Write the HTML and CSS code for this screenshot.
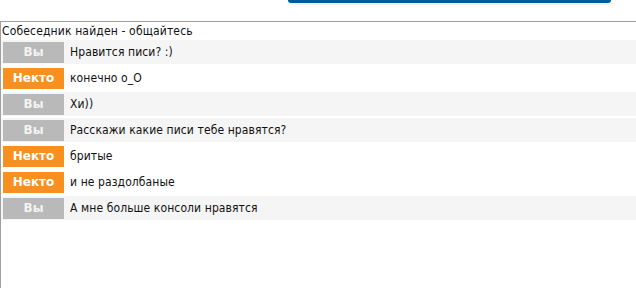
FILE: index.html
```html
<!DOCTYPE html>
<html lang="ru">
<head>
<meta charset="utf-8">
<link rel="stylesheet" href="styles.css">
</head>
<body>
<div class="top">
  <div class="topbar"></div>
</div>
<div class="chat">
  <div class="status">Собеседник найден - общайтесь</div>
  <div class="msgs">
    <div class="row you"><span class="who">Вы</span><span class="text">Нравится писи? :)</span></div>
    <div class="row other"><span class="who">Некто</span><span class="text">конечно о_О</span></div>
    <div class="row you"><span class="who">Вы</span><span class="text">Хи))</span></div>
    <div class="row you"><span class="who">Вы</span><span class="text">Расскажи какие писи тебе нравятся?</span></div>
    <div class="row other"><span class="who">Некто</span><span class="text">бритые</span></div>
    <div class="row other"><span class="who">Некто</span><span class="text">и не раздолбаные</span></div>
    <div class="row you"><span class="who">Вы</span><span class="text">А мне больше консоли нравятся</span></div>
  </div>
</div>
</body>
</html>
```
FILE: styles.css
```css
html, body {
  margin: 0;
  padding: 0;
  background: #fff;
}
body {
  width: 636px;
  height: 288px;
  overflow: hidden;
  font-family: "DejaVu Sans Condensed", "DejaVu Sans", Verdana, sans-serif;
  font-stretch: condensed;
  font-size: 12px;
  color: #111;
}
.top {
  height: 21px;
  padding-left: 288px;
}
.topbar {
  width: 323px;
  height: 3px;
  background: #005a96;
  border-radius: 0 0 3px 3px;
  box-shadow: 0 2px 3px rgba(200, 200, 180, 0.35);
}
.chat {
  border-top: 1px solid #a0a0a0;
  border-left: 1px solid #a0a0a0;
  height: 266px;
}
.status {
  height: 18px;
  line-height: 18px;
  padding-left: 1px;
  letter-spacing: 0.15px;
}
.msgs {
  display: flex;
  flex-direction: column;
  gap: 2px;
}
.row {
  height: 24px;
  display: flex;
  align-items: center;
  padding-left: 2px;
}
.row.you { background: #f5f5f5; }
.row.other { background: #fff; }
.who {
  width: 61px;
  height: 21px;
  line-height: 21px;
  text-align: center;
  font-family: "DejaVu Sans", Verdana, sans-serif;
  font-stretch: normal;
  font-size: 12px;
  font-weight: bold;
  color: #fff;
  flex: none;
}
.you .who { background: #b9b9b9; color: #f4f4f4; }
.other .who { background: #f7901e; }
.text {
  padding-left: 6px;
  letter-spacing: 0.1px;
}
```
